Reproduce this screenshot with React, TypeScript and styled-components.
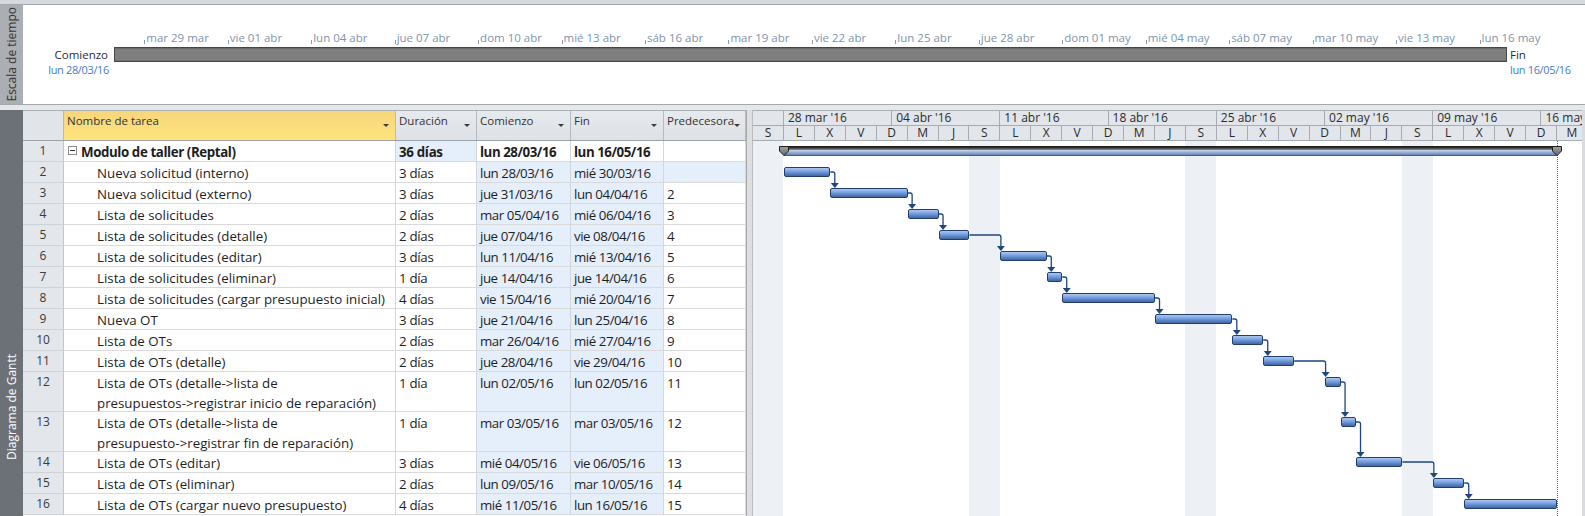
import React from "react";
import styled, { createGlobalStyle } from "styled-components";

const FONT = `"Open Sans", "Noto Sans", "DejaVu Sans", sans-serif`;

const GlobalStyle = createGlobalStyle`
  * { box-sizing: border-box; }
  html, body { margin: 0; padding: 0; background: #ffffff; }
  body { font-family: ${FONT}; color: #222; overflow: hidden; }
  #root { width: 1585px; height: 516px; }
`;

const DAY = 15.462;
const LETTERS = ["L", "M", "X", "J", "V", "S", "D"];
const WEEKEND_COLS = [0, 14, 28, 42];
const COLS = "41px 332px 81px 94px 93px 82px";

type Task = {
  id: number;
  name: string;
  dur: string;
  start: string;
  finish: string;
  pred?: number;
  s: number;
  e: number;
  tall?: boolean;
  summary?: boolean;
  hl: { dur?: boolean; start?: boolean; finish?: boolean; pred?: boolean };
};

const SE = { start: true, finish: true };

const TASKS: Task[] = [
  { id: 1, name: "Modulo de taller (Reptal)", dur: "36 días", start: "lun 28/03/16", finish: "lun 16/05/16", s: 2, e: 52, summary: true, hl: { dur: true } },
  { id: 2, name: "Nueva solicitud (interno)", dur: "3 días", start: "lun 28/03/16", finish: "mié 30/03/16", s: 2, e: 5, hl: { start: true, finish: true, pred: true } },
  { id: 3, name: "Nueva solicitud (externo)", dur: "3 días", start: "jue 31/03/16", finish: "lun 04/04/16", pred: 2, s: 5, e: 10, hl: SE },
  { id: 4, name: "Lista de solicitudes", dur: "2 días", start: "mar 05/04/16", finish: "mié 06/04/16", pred: 3, s: 10, e: 12, hl: SE },
  { id: 5, name: "Lista de solicitudes (detalle)", dur: "2 días", start: "jue 07/04/16", finish: "vie 08/04/16", pred: 4, s: 12, e: 14, hl: SE },
  { id: 6, name: "Lista de solicitudes (editar)", dur: "3 días", start: "lun 11/04/16", finish: "mié 13/04/16", pred: 5, s: 16, e: 19, hl: SE },
  { id: 7, name: "Lista de solicitudes (eliminar)", dur: "1 día", start: "jue 14/04/16", finish: "jue 14/04/16", pred: 6, s: 19, e: 20, hl: SE },
  { id: 8, name: "Lista de solicitudes (cargar presupuesto inicial)", dur: "4 días", start: "vie 15/04/16", finish: "mié 20/04/16", pred: 7, s: 20, e: 26, hl: SE },
  { id: 9, name: "Nueva OT", dur: "3 días", start: "jue 21/04/16", finish: "lun 25/04/16", pred: 8, s: 26, e: 31, hl: SE },
  { id: 10, name: "Lista de OTs", dur: "2 días", start: "mar 26/04/16", finish: "mié 27/04/16", pred: 9, s: 31, e: 33, hl: SE },
  { id: 11, name: "Lista de OTs (detalle)", dur: "2 días", start: "jue 28/04/16", finish: "vie 29/04/16", pred: 10, s: 33, e: 35, hl: SE },
  { id: 12, name: "Lista de OTs (detalle->lista de\npresupuestos->registrar inicio de reparación)", dur: "1 día", start: "lun 02/05/16", finish: "lun 02/05/16", pred: 11, s: 37, e: 38, tall: true, hl: SE },
  { id: 13, name: "Lista de OTs (detalle->lista de\npresupuesto->registrar fin de reparación)", dur: "1 día", start: "mar 03/05/16", finish: "mar 03/05/16", pred: 12, s: 38, e: 39, tall: true, hl: SE },
  { id: 14, name: "Lista de OTs (editar)", dur: "3 días", start: "mié 04/05/16", finish: "vie 06/05/16", pred: 13, s: 39, e: 42, hl: SE },
  { id: 15, name: "Lista de OTs (eliminar)", dur: "2 días", start: "lun 09/05/16", finish: "mar 10/05/16", pred: 14, s: 44, e: 46, hl: SE },
  { id: 16, name: "Lista de OTs (cargar nuevo presupuesto)", dur: "4 días", start: "mié 11/05/16", finish: "lun 16/05/16", pred: 15, s: 46, e: 52, hl: SE },
];

const rowH = (t: Task) => (t.tall ? 40 : 21);
const TOPS: number[] = [];
TASKS.reduce((acc, t) => {
  TOPS.push(acc);
  return acc + rowH(t);
}, 0);
const BODY_H = 375;

const TICKS = [
  "mar 29 mar", "vie 01 abr", "lun 04 abr", "jue 07 abr", "dom 10 abr", "mié 13 abr",
  "sáb 16 abr", "mar 19 abr", "vie 22 abr", "lun 25 abr", "jue 28 abr", "dom 01 may",
  "mié 04 may", "sáb 07 may", "mar 10 may", "vie 13 may", "lun 16 may",
];

const WEEKS = [
  { label: "", days: 2 },
  { label: "28 mar '16", days: 7 },
  { label: "04 abr '16", days: 7 },
  { label: "11 abr '16", days: 7 },
  { label: "18 abr '16", days: 7 },
  { label: "25 abr '16", days: 7 },
  { label: "02 may '16", days: 7 },
  { label: "09 may '16", days: 7 },
  { label: "16 may '16", days: 7 },
];

/* ---------- page frame ---------- */

const Page = styled.div`
  width: 1585px;
  height: 516px;
  display: flex;
  flex-direction: column;
  background: #fff;
  overflow: hidden;
`;

const TopStrip = styled.div`
  flex: none;
  height: 5px;
  background: #d6dade;
  border-bottom: 1px solid #a3a8ae;
`;

const TimelinePane = styled.div`
  flex: none;
  height: 100px;
  display: flex;
  border-bottom: 1px solid #a5a9ae;
`;

const Gap = styled.div`
  flex: none;
  height: 5px;
  background: #e5e7ea;
`;

const SideLabel = styled.div<{ $dark?: boolean }>`
  flex: none;
  width: 23px;
  display: flex;
  flex-direction: column;
  align-items: center;
  justify-content: ${(p) => (p.$dark ? "flex-end" : "center")};
  padding-bottom: ${(p) => (p.$dark ? 56 : 0)}px;
  background: ${(p) => (p.$dark ? "#6c7077" : "#abaeb2")};
  color: ${(p) => (p.$dark ? "#ffffff" : "#353535")};
`;

const SideText = styled.span`
  writing-mode: vertical-rl;
  transform: rotate(180deg);
  font-size: 12px;
  line-height: 23px;
  white-space: nowrap;
`;

/* ---------- timeline ---------- */

const TimelineBody = styled.div`
  flex: 1;
  display: grid;
  grid-template-columns: 91px 1393px 1fr;
  grid-template-rows: 16px 17px 14px;
  align-content: start;
  padding-top: 25px;
`;

const TickTrack = styled.div`
  position: relative;
`;

const Tick = styled.div`
  position: absolute;
  bottom: 1px;
  padding-left: 2px;
  font-size: 11.5px;
  line-height: 14px;
  color: #8093ad;
  white-space: nowrap;
  &::before {
    content: "";
    position: absolute;
    left: 0;
    bottom: 1px;
    width: 1px;
    height: 4px;
    background: #8c9bb1;
  }
`;

const SpanBar = styled.div`
  align-self: center;
  height: 15px;
  background: #7f7f7f;
  border: 1px solid #464646;
  box-shadow: inset 0 1px 0 #6a6a6a, inset 0 -1px 0 #6f6f6f;
`;

const EdgeLabel = styled.div<{ $end?: boolean }>`
  font-size: 11.5px;
  line-height: 17px;
  color: #1f2a36;
  text-align: ${(p) => (p.$end ? "left" : "right")};
  padding: ${(p) => (p.$end ? "0 0 0 3px" : "0 6px 0 0")};
  white-space: nowrap;
`;

const EdgeDate = styled.div<{ $end?: boolean }>`
  font-size: 11px;
  line-height: 14px;
  letter-spacing: -0.35px;
  color: #4a7cbc;
  text-align: ${(p) => (p.$end ? "left" : "right")};
  padding: ${(p) => (p.$end ? "0 0 0 3px" : "0 5px 0 0")};
  white-space: nowrap;
`;

/* ---------- gantt view ---------- */

const GanttPane = styled.div`
  flex: 1;
  display: flex;
  min-height: 0;
`;

const Table = styled.div`
  flex: none;
  width: 723px;
  display: flex;
  flex-direction: column;
`;

const HeaderRow = styled.div`
  display: grid;
  grid-template-columns: ${COLS};
  height: 31px;
  border-top: 1px solid #aab0b6;
  border-bottom: 1px solid #9da3aa;
`;

const CornerCell = styled.div`
  background: #e1e4e8;
  border-right: 1px solid #b5bac0;
`;

const HeadCell = styled.div<{ $active?: boolean }>`
  display: flex;
  justify-content: space-between;
  align-items: flex-start;
  padding: 2px 6px 0 3px;
  font-size: 11.5px;
  line-height: 16px;
  color: #333;
  white-space: nowrap;
  background: ${(p) =>
    p.$active
      ? "linear-gradient(to bottom, #f7d67c, #fde47c)"
      : "linear-gradient(to bottom, #e6e9ed, #dee2e7)"};
  border-right: 1px solid ${(p) => (p.$active ? "#e2b85a" : "#b5bac0")};
`;

const DropArrow = styled.span`
  flex: none;
  width: 0;
  height: 0;
  margin-top: 11px;
  border-left: 3.5px solid transparent;
  border-right: 3.5px solid transparent;
  border-top: 3.5px solid #3a3a3a;
`;

const Row = styled.div<{ $h: number }>`
  display: grid;
  grid-template-columns: ${COLS};
  height: ${(p) => p.$h}px;
`;

const NumCell = styled.div`
  background: #e3e6ea;
  border-right: 1px solid #c2c6cb;
  border-bottom: 1px solid #cfd3d7;
  text-align: center;
  font-size: 12px;
  line-height: 19px;
  color: #3a3a3a;
`;

const Cell = styled.div<{ $hl?: boolean; $bold?: boolean; $tight?: number }>`
  padding: 1px 3px 0;
  font-size: 13.3px;
  line-height: 20px;
  white-space: nowrap;
  overflow: hidden;
  color: #1e1e1e;
  font-weight: ${(p) => (p.$bold ? 700 : 400)};
  letter-spacing: ${(p) => p.$tight ?? 0}px;
  background: ${(p) => (p.$hl ? "#e5eefb" : "#ffffff")};
  border-right: 1px solid #d3d6da;
  border-bottom: 1px solid #dadada;
`;

const NameCell = styled(Cell)<{ $indent: number }>`
  display: flex;
  align-items: flex-start;
  white-space: pre-line;
  padding-left: ${(p) => p.$indent}px;
  letter-spacing: ${(p) => (p.$bold ? -0.4 : 0)}px;
`;

const CollapseBox = styled.span`
  position: relative;
  flex: none;
  width: 9px;
  height: 9px;
  margin: 4px 4px 0 0;
  border: 1px solid #8c8c8c;
  background: #fff;
  &::after {
    content: "";
    position: absolute;
    left: 1px;
    right: 1px;
    top: 3px;
    height: 1px;
    background: #333;
  }
`;

const Splitter = styled.div`
  flex: none;
  width: 7px;
  background: #dcdee1;
  border-left: 1px solid #a9a9a9;
  border-right: 1px solid #bcbcbc;
`;

const Chart = styled.div`
  flex: 1;
  min-width: 0;
  display: flex;
  flex-direction: column;
  overflow: hidden;
  border-right: 3px solid #d8dbe0;
`;

const Timescale = styled.div`
  flex: none;
  border-top: 1px solid #aab0b6;
  background: #e2e5e9;
`;

const Tier = styled.div`
  display: flex;
  height: 15px;
  border-bottom: 1px solid #a7acb3;
  white-space: nowrap;
`;

const TierCell = styled.div<{ $center?: boolean }>`
  flex: none;
  height: 100%;
  border-right: 1px solid #a7acb3;
  font-size: 12px;
  line-height: 14px;
  color: #2b2b2b;
  padding-left: ${(p) => (p.$center ? 0 : 4)}px;
  text-align: ${(p) => (p.$center ? "center" : "left")};
`;

const ChartBody = styled.div`
  position: relative;
  flex: 1;
  background: #fff;
`;

const Shade = styled.div`
  position: absolute;
  top: 0;
  bottom: 0;
  background: #edf0f5;
`;

const FinishLine = styled.div`
  position: absolute;
  top: 0;
  bottom: 0;
  width: 0;
  border-left: 1px dotted #6b6b6b;
`;

const GanttRow = styled.div<{ $h: number }>`
  position: relative;
  height: ${(p) => p.$h}px;
`;

const TaskBar = styled.div`
  position: absolute;
  top: 5px;
  height: 10px;
  border: 1px solid #213f6d;
  border-radius: 2px;
  background: linear-gradient(
    to bottom,
    #a9c7f2 0%,
    #88ade7 30%,
    #6f97d8 52%,
    #5a81c2 72%,
    #42669e 100%
  );
`;

const SummaryBar = styled.div`
  position: absolute;
  top: 5px;
  height: 10px;
  background: linear-gradient(
    to bottom,
    #0f0f0f 0%,
    #262626 12%,
    #5c5c5c 28%,
    #8c8c8c 40%,
    #c4d3ea 44%,
    #9ab3da 62%,
    #718fc2 84%,
    #2b4a7b 100%
  );
`;

const Cap = styled.svg`
  position: absolute;
  top: 5px;
  width: 10px;
  height: 10px;
  margin-left: -5px;
  overflow: visible;
`;

const LinkLayer = styled.svg`
  position: absolute;
  left: 0;
  top: 0;
  pointer-events: none;
  overflow: visible;
`;

/* ---------- parts ---------- */

function Timeline() {
  return (
    <TimelinePane>
      <SideLabel>
        <SideText>Escala de tiempo</SideText>
      </SideLabel>
      <TimelineBody>
        <div />
        <TickTrack>
          {TICKS.map((t, i) => (
            <Tick key={t} style={{ left: 30.3 + i * 83.45 }}>
              {t}
            </Tick>
          ))}
        </TickTrack>
        <div />
        <EdgeLabel>Comienzo</EdgeLabel>
        <SpanBar />
        <EdgeLabel $end>Fin</EdgeLabel>
        <EdgeDate>lun 28/03/16</EdgeDate>
        <div />
        <EdgeDate $end>lun 16/05/16</EdgeDate>
      </TimelineBody>
    </TimelinePane>
  );
}

function TaskTable() {
  const heads = ["Duración", "Comienzo", "Fin", "Predecesora"];
  return (
    <Table>
      <HeaderRow>
        <CornerCell />
        <HeadCell $active>
          <span>Nombre de tarea</span>
          <DropArrow />
        </HeadCell>
        {heads.map((h) => (
          <HeadCell key={h}>
            <span>{h}</span>
            <DropArrow />
          </HeadCell>
        ))}
      </HeaderRow>
      {TASKS.map((t) => (
        <Row key={t.id} $h={rowH(t)}>
          <NumCell>{t.id}</NumCell>
          <NameCell $indent={t.summary ? 4 : 33} $bold={t.summary}>
            {t.summary && <CollapseBox />}
            <span>{t.name}</span>
          </NameCell>
          <Cell $bold={t.summary} $hl={t.hl.dur} $tight={-0.3}>
            {t.dur}
          </Cell>
          <Cell $bold={t.summary} $hl={t.hl.start} $tight={-0.45}>
            {t.start}
          </Cell>
          <Cell $bold={t.summary} $hl={t.hl.finish} $tight={-0.45}>
            {t.finish}
          </Cell>
          <Cell $hl={t.hl.pred} $tight={-0.3}>
            {t.pred ?? ""}
          </Cell>
        </Row>
      ))}
    </Table>
  );
}

function Links() {
  const paths: { d: string; arrow: string }[] = [];
  TASKS.forEach((t) => {
    if (!t.pred) return;
    const p = TASKS[t.pred - 1];
    const x1 = p.e * DAY;
    const y1 = TOPS[p.id - 1] + 10;
    const vx = Math.max(x1 + 4.5, t.s * DAY + 0.5);
    const yT = TOPS[t.id - 1] + 5;
    paths.push({
      d: `M${x1} ${y1} H${vx - 2} Q${vx} ${y1} ${vx} ${y1 + 2} V${yT - 4}`,
      arrow: `${vx - 4},${yT - 5} ${vx + 4},${yT - 5} ${vx},${yT}`,
    });
  });
  return (
    <LinkLayer width={830} height={BODY_H}>
      {paths.map((p, i) => (
        <g key={i}>
          <path d={p.d} fill="none" stroke="#1f467f" strokeWidth={1.3} />
          <polygon points={p.arrow} fill="#1f467f" />
        </g>
      ))}
    </LinkLayer>
  );
}

function SummaryCap({ x }: { x: number }) {
  return (
    <Cap style={{ left: x }} viewBox="0 0 10 10">
      <defs>
        <linearGradient id={`cap${x}`} x1="0" y1="0" x2="0" y2="1">
          <stop offset="0" stopColor="#a3a3a3" />
          <stop offset="1" stopColor="#666666" />
        </linearGradient>
      </defs>
      <polygon points="0.5,0.5 9.5,0.5 9.5,5 5,9.6 0.5,5" fill={`url(#cap${x})`} stroke="#1e1e1e" strokeWidth={1} />
    </Cap>
  );
}

function GanttChart() {
  const cols = Array.from({ length: 27 }, (_, k) => LETTERS[(5 + 2 * k) % 7]);
  return (
    <Chart>
      <Timescale>
        <Tier>
          {WEEKS.map((w, i) => (
            <TierCell key={i} style={{ width: w.days * DAY }}>
              {w.label}
            </TierCell>
          ))}
        </Tier>
        <Tier>
          {cols.map((c, i) => (
            <TierCell key={i} $center style={{ width: 2 * DAY }}>
              {c}
            </TierCell>
          ))}
        </Tier>
      </Timescale>
      <ChartBody>
        {WEEKEND_COLS.map((d) => (
          <Shade key={d} style={{ left: d * DAY - 0.5, width: 2 * DAY }} />
        ))}
        <FinishLine style={{ left: 52 * DAY - 0.5 }} />
        {TASKS.map((t) => (
          <GanttRow key={t.id} $h={rowH(t)}>
            {t.summary ? (
              <>
                <SummaryBar style={{ left: t.s * DAY, width: (t.e - t.s) * DAY }} />
                <SummaryCap x={t.s * DAY} />
                <SummaryCap x={t.e * DAY} />
              </>
            ) : (
              <TaskBar style={{ left: t.s * DAY, width: (t.e - t.s) * DAY }} />
            )}
          </GanttRow>
        ))}
        <Links />
      </ChartBody>
    </Chart>
  );
}

export default function App() {
  return (
    <>
      <GlobalStyle />
      <Page>
        <TopStrip />
        <Timeline />
        <Gap />
        <GanttPane>
          <SideLabel $dark>
            <SideText>Diagrama de Gantt</SideText>
          </SideLabel>
          <TaskTable />
          <Splitter />
          <GanttChart />
        </GanttPane>
      </Page>
    </>
  );
}
